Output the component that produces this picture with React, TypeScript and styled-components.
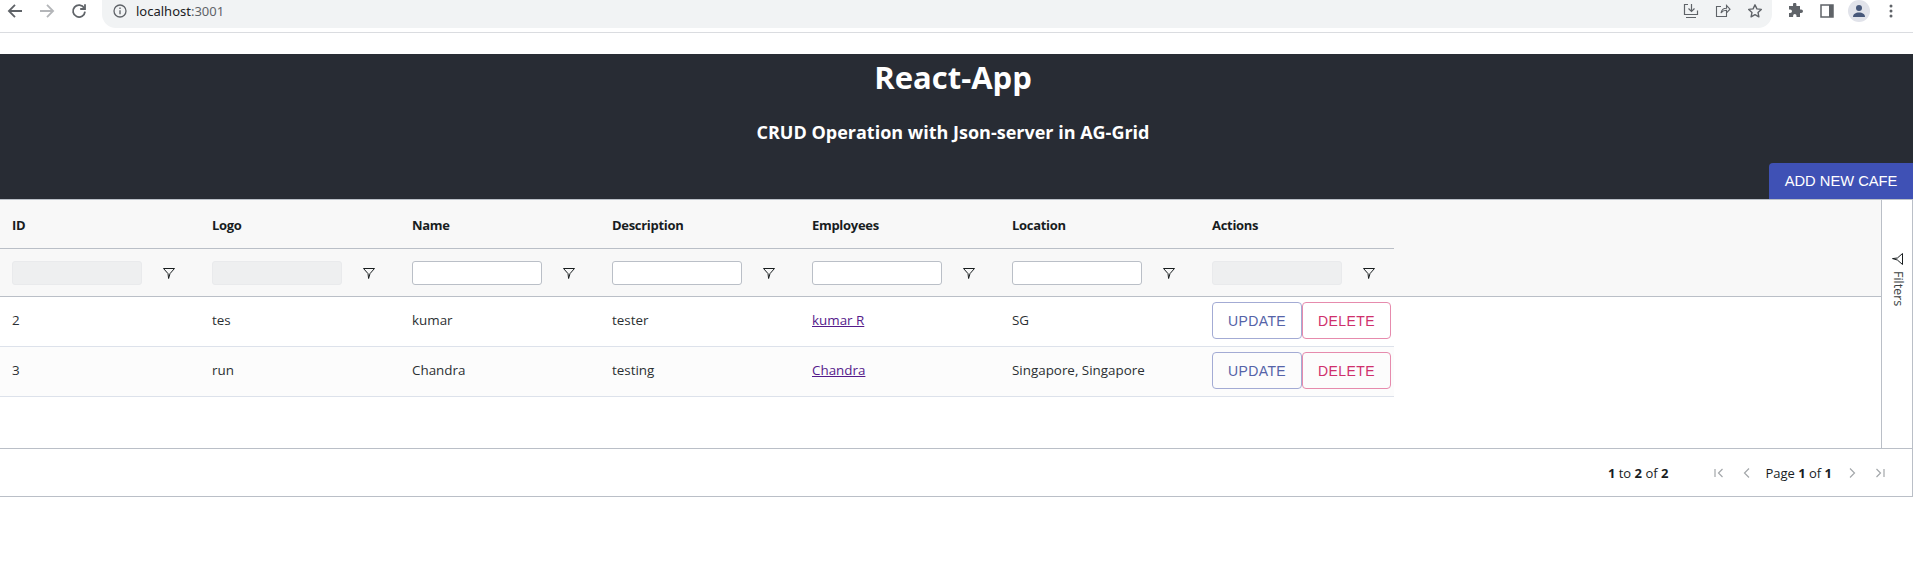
import React from "react"
import styled, { createGlobalStyle } from "styled-components"

const GlobalStyle = createGlobalStyle`
  html, body {
    margin: 0;
    padding: 0;
    background: #fff;
    font-family: "Open Sans", "Noto Sans", sans-serif;
    color: #181d1f;
  }
`

const columns = ["ID", "Logo", "Name", "Description", "Employees", "Location", "Actions"]
const editable = [false, false, true, true, true, true, false]

const rows = [
  { id: "2", logo: "tes", name: "kumar", description: "tester", employee: "kumar R", location: "SG" },
  { id: "3", logo: "run", name: "Chandra", description: "testing", employee: "Chandra", location: "Singapore, Singapore" },
]

const FilterIcon = () => (
  <svg width="14" height="14" viewBox="0 0 14 14" fill="none" stroke="#181d1f" strokeWidth="1">
    <path d="M1.500 2.500h11L8 7.600 6.600 12.500 6 7.600z" strokeLinejoin="round" />
  </svg>
)

const Pager = ({ d }: { d: string }) => (
  <svg width="14" height="14" viewBox="0 0 14 14" fill="none" stroke="#a3a7aa" strokeWidth="1.200">
    <path d={d} />
  </svg>
)

export default function App() {
  return (
    <>
      <GlobalStyle />
      {/* Browser toolbar */}
      <S.Chrome>
        <S.NavIcon>
          <svg width="16" height="16" viewBox="0 0 16 16" fill="none" stroke="#5f6368" strokeWidth="1.800">
            <path d="M15 8H2M8 1.800 1.900 8 8 14.200" />
          </svg>
        </S.NavIcon>
        <S.NavIcon>
          <svg width="16" height="16" viewBox="0 0 16 16" fill="none" stroke="#b4b6b9" strokeWidth="1.800">
            <path d="M1 8H14M8 1.800 14.100 8 8 14.200" />
          </svg>
        </S.NavIcon>
        <S.NavIcon>
          <svg width="16" height="16" viewBox="0 0 16 16" fill="none" stroke="#5f6368" strokeWidth="1.800">
            <path d="M13.200 5A6 6 0 1 0 14 8.600" />
            <path d="M14 1.200V6H9.200" />
          </svg>
        </S.NavIcon>
        <S.Omnibox>
          <S.InfoIcon>
            <svg width="14" height="14" viewBox="0 0 14 14" fill="none" stroke="#5f6368" strokeWidth="1.300">
              <circle cx="7" cy="7" r="6" />
              <path d="M7 6.200v4M7 3.600v1.500" />
            </svg>
          </S.InfoIcon>
          <S.Url>
            localhost<S.UrlPort>:3001</S.UrlPort>
          </S.Url>
          <S.OmniIcons>
            <svg width="16" height="16" viewBox="0 0 16 16" fill="none" stroke="#5f6368" strokeWidth="1.200">
              <path d="M5 1.500H1.500v10h13v-4M8.500 1v7M5.500 5.500l3 3 3-3M3 14.500h10" />
            </svg>
            <svg width="16" height="16" viewBox="0 0 16 16" fill="none" stroke="#5f6368" strokeWidth="1.100">
              <path d="M6 3.500H1.500v10h10V10M6 10c.5-3 3-4.800 5.500-4.800V2.500L15 6.200l-3.500 3.700V7.300C9.500 7.300 7.500 8 6 10z" />
            </svg>
            <svg width="16" height="16" viewBox="0 0 16 16" fill="none" stroke="#5f6368" strokeWidth="1.400">
              <path d="m8 1.800 1.900 4.100 4.400.5-3.300 3 .9 4.400L8 11.600l-3.900 2.200.9-4.400-3.300-3 4.400-.5z" strokeLinejoin="round" />
            </svg>
          </S.OmniIcons>
        </S.Omnibox>
        <S.ChromeActions>
          <svg width="16" height="16" viewBox="0 0 16 16" fill="#5f6368">
            <path d="M6 1.500a1.700 1.700 0 0 1 3.400 0V3H13v3.500h1.200a1.800 1.800 0 0 1 0 3.600H13V14H9.500v-1.200a1.700 1.700 0 0 0-3.400 0V14H2v-3.900h1.200a1.800 1.800 0 0 0 0-3.600H2V3h4z" />
          </svg>
          <svg width="16" height="16" viewBox="0 0 16 16" fill="none">
            <rect x="2" y="2" width="12" height="12" fill="#fff" stroke="#5f6368" strokeWidth="1.500" />
            <rect x="10" y="2" width="4" height="12" fill="#5f6368" />
          </svg>
          <S.Avatar>
            <svg width="14" height="14" viewBox="0 0 14 14" fill="#47587a">
              <circle cx="7" cy="4" r="3" />
              <path d="M1 13c0-3 2.500-4.500 6-4.500s6 1.500 6 4.500z" />
            </svg>
          </S.Avatar>
          <svg width="16" height="16" viewBox="0 0 16 16" fill="#5f6368">
            <circle cx="8" cy="3" r="1.500" />
            <circle cx="8" cy="8" r="1.500" />
            <circle cx="8" cy="13" r="1.500" />
          </svg>
        </S.ChromeActions>
      </S.Chrome>

      <S.Banner>
        <S.Title>React-App</S.Title>
        <S.Subtitle>CRUD Operation with Json-server in AG-Grid</S.Subtitle>
        <S.AddButton>ADD NEW CAFE</S.AddButton>
      </S.Banner>

      {/* Grid */}
      <S.Grid>
        <S.GridBody>
          <S.GridMain>
            <S.HeaderArea>
              <S.HeaderRow>
                {columns.map((c) => (
                  <S.HeaderCell key={c}>{c}</S.HeaderCell>
                ))}
              </S.HeaderRow>
              <S.FilterRow>
                {columns.map((c, i) => (
                  <S.FilterCell key={c}>
                    <S.FilterInput disabled={!editable[i]} />
                    <S.FilterButton>
                      <FilterIcon />
                    </S.FilterButton>
                  </S.FilterCell>
                ))}
              </S.FilterRow>
            </S.HeaderArea>
            <S.RowsArea>
              {rows.map((r, i) => (
                <S.Row key={r.id} $odd={i % 2 === 1}>
                  <S.Cell>{r.id}</S.Cell>
                  <S.Cell>{r.logo}</S.Cell>
                  <S.Cell>{r.name}</S.Cell>
                  <S.Cell>{r.description}</S.Cell>
                  <S.Cell>
                    <S.EmployeeLink href="#">{r.employee}</S.EmployeeLink>
                  </S.Cell>
                  <S.Cell>{r.location}</S.Cell>
                  <S.ActionCell>
                    <S.OutlineButton $color="#5563a8" $border="#a3abd4" $width={90}>UPDATE</S.OutlineButton>
                    <S.OutlineButton $color="#cf2f6c" $border="#e68bad" $width={89}>DELETE</S.OutlineButton>
                  </S.ActionCell>
                </S.Row>
              ))}
            </S.RowsArea>
          </S.GridMain>
          <S.SideBar>
            <S.SideButton>
              <S.SideIcon>
                <FilterIcon />
              </S.SideIcon>
              <S.SideLabel>Filters</S.SideLabel>
            </S.SideButton>
          </S.SideBar>
        </S.GridBody>
        <S.Paging>
          <S.Summary>
            <b>1</b> to <b>2</b> of <b>2</b>
          </S.Summary>
          <S.PageNav>
            <Pager d="M3 3v8M10.500 3l-4 4 4 4" />
            <Pager d="M9 2.500 4.500 7 9 11.500" />
            <S.PageText>
              Page <b>1</b> of <b>1</b>
            </S.PageText>
            <Pager d="M5 2.500 9.500 7 5 11.500" />
            <Pager d="M11 3v8M3.500 3l4 4-4 4" />
          </S.PageNav>
        </S.Paging>
      </S.Grid>
    </>
  )
}

const S = {
  Chrome: styled.div`
    display: flex;
    align-items: flex-start;
    height: 32px;
    border-bottom: 1px solid #dadce0;
    padding-left: 7px;
  `,
  NavIcon: styled.div`
    width: 32px;
    height: 22px;
    display: flex;
    align-items: center;
  `,
  Omnibox: styled.div`
    width: 1670px;
    height: 28px;
    margin-left: -1px;
    padding: 4px 0 0 11px;
    box-sizing: border-box;
    display: flex;
    align-items: flex-start;
    background: #f1f3f4;
    border-radius: 0 0 14px 14px;
  `,
  InfoIcon: styled.span`
    display: flex;
    margin-right: 9px;
  `,
  Url: styled.span`
    font-family: "Noto Sans", sans-serif;
    font-size: 13px;
    line-height: 14px;
    color: #202124;
  `,
  UrlPort: styled.span`
    color: #5f6368;
  `,
  OmniIcons: styled.div`
    margin-left: auto;
    margin-right: 9px;
    margin-top: -1px;
    display: flex;
    gap: 16px;
  `,
  ChromeActions: styled.div`
    display: flex;
    align-items: center;
    height: 22px;
    gap: 16px;
    margin-left: 15px;
  `,
  Avatar: styled.div`
    width: 22px;
    height: 22px;
    margin: 0 -3px;
    border-radius: 50%;
    background: #e1e3ea;
    display: flex;
    align-items: center;
    justify-content: center;
  `,
  Banner: styled.header`
    margin-top: 21px;
    height: 145px;
    padding-right: 7px;
    background: #282c34;
    display: flex;
    flex-direction: column;
    align-items: center;
    color: #fff;
  `,
  Title: styled.h1`
    margin: 0;
    height: 48px;
    font-size: 31px;
    line-height: 47px;
    font-weight: 700;
  `,
  Subtitle: styled.h3`
    margin: 18px 0 0;
    height: 24px;
    font-size: 18px;
    line-height: 25px;
    font-weight: 700;
  `,
  AddButton: styled.button`
    align-self: flex-end;
    margin: 19px -7px 0 0;
    width: 144px;
    height: 36px;
    border: 0;
    border-radius: 4px 0 0 0;
    background: #3f51b5;
    color: #fff;
    font-family: "Liberation Sans", Arial, sans-serif;
    font-size: 14.700px;
    padding: 0;
  `,
  Grid: styled.section`
    border-top: 1px solid #babfc7;
    border-bottom: 1px solid #babfc7;
    border-right: 1px solid #babfc7;
    height: 298px;
    box-sizing: border-box;
    display: flex;
    flex-direction: column;
    font-size: 13.400px;
  `,
  GridBody: styled.div`
    display: flex;
    height: 249px;
    border-bottom: 1px solid #babfc7;
    box-sizing: border-box;
  `,
  GridMain: styled.div`
    flex: 1;
    min-width: 0;
  `,
  HeaderArea: styled.div`
    height: 96px;
    background: #f8f8f8;
    border-bottom: 1px solid #babfc7;
  `,
  HeaderRow: styled.div`
    display: grid;
    grid-template-columns: repeat(6, 200px) 194px;
    width: 1394px;
    height: 48px;
    border-bottom: 1px solid #babfc7;
  `,
  HeaderCell: styled.div`
    padding-left: 12px;
    line-height: 50px;
    font-size: 13px;
    letter-spacing: -0.3px;
    font-weight: 700;
  `,
  FilterRow: styled.div`
    display: grid;
    grid-template-columns: repeat(6, 200px) 194px;
    width: 1394px;
    height: 47px;
  `,
  FilterCell: styled.div`
    padding-left: 12px;
    display: flex;
    align-items: center;
  `,
  FilterInput: styled.input`
    width: 130px;
    height: 24px;
    box-sizing: border-box;
    padding: 0 6px;
    border: 1px solid #babfc7;
    border-radius: 3px;
    background: #fff;
    &:disabled {
      background: #eeeff0;
      border-color: #e9eaec;
    }
  `,
  FilterButton: styled.span`
    margin-left: 20px;
    width: 14px;
    height: 14px;
    display: flex;
  `,
  RowsArea: styled.div`
    background: #fff;
  `,
  Row: styled.div<{ $odd: boolean }>`
    display: grid;
    grid-template-columns: repeat(6, 200px) 194px;
    width: 1394px;
    height: 50px;
    box-sizing: border-box;
    border-bottom: 1px solid #dde2eb;
    background: ${({ $odd }) => ($odd ? "#fcfcfc" : "#fff")};
  `,
  Cell: styled.div`
    padding-left: 12px;
    line-height: 47px;
    white-space: nowrap;
    color: #2b3033;
  `,
  EmployeeLink: styled.a`
    color: #551a8b;
    text-decoration: underline;
  `,
  ActionCell: styled.div`
    padding: 5px 0 0 12px;
    display: flex;
    align-items: flex-start;
  `,
  OutlineButton: styled.button<{ $color: string; $border: string; $width: number }>`
    height: 37px;
    width: ${({ $width }) => $width}px;
    padding: 0;
    background: transparent;
    border: 1px solid ${({ $border }) => $border};
    border-radius: 4px;
    color: ${({ $color }) => $color};
    font-family: "Liberation Sans", Arial, sans-serif;
    font-size: 14px;
    letter-spacing: 0.4px;
  `,
  SideBar: styled.aside`
    width: 30px;
    border-left: 1px solid #babfc7;
    background: #fff;
  `,
  SideButton: styled.div`
    display: flex;
    flex-direction: column;
    align-items: center;
    padding: 52px 0 0 1px;
  `,
  SideIcon: styled.span`
    display: flex;
    transform: rotate(90deg);
  `,
  SideLabel: styled.span`
    writing-mode: vertical-rl;
    margin-top: 5px;
    font-size: 12.500px;
    line-height: 14px;
    color: #3a3f42;
  `,
  Paging: styled.footer`
    flex: 1;
    display: flex;
    align-items: center;
    justify-content: flex-end;
    padding-right: 25px;
    font-size: 13px;
    b {
      font-weight: 700;
    }
  `,
  Summary: styled.span`
    margin-right: 44px;
  `,
  PageNav: styled.div`
    display: flex;
    align-items: center;
    gap: 14px;
  `,
  PageText: styled.span`
    margin: 0 -1px 0 -3px;
  `,
}
